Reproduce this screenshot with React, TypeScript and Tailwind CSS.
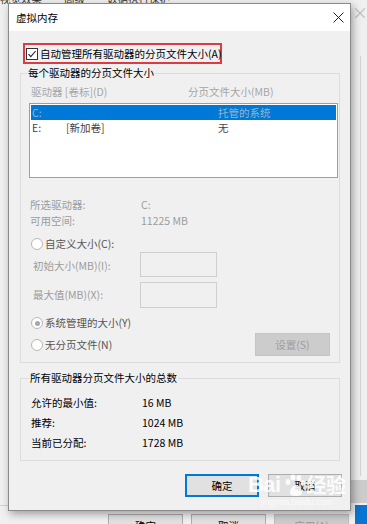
import * as React from 'react';

const font = { fontFamily: '"Noto Sans CJK SC", "Noto Sans", sans-serif' };

function Radio({ checked, label, dark }: { checked?: boolean; label: string; dark?: boolean }) {
  return (
    <div className="flex items-center gap-[2px]">
      <span className="flex h-[12px] w-[12px] items-center justify-center rounded-full border border-[#b8b8b8] bg-white">
        {checked && <span className="h-[5px] w-[5px] rounded-full bg-[#a8a8a8]" />}
      </span>
      <span className={dark ? 'text-[#555]' : 'text-[#9c9c9c]'}>{label}</span>
    </div>
  );
}

function BaiduMark() {
  return (
    <div className="pointer-events-none absolute left-[248px] top-[473px] flex flex-col items-center text-white/85">
      <div className="flex items-end text-[22px] font-bold leading-[24px] tracking-tight" style={{ fontFamily: 'Arial, "Liberation Sans", sans-serif' }}>
        <span>Bai</span>
        <svg width="24" height="24" viewBox="0 0 24 24" className="mx-[1px]">
          <ellipse cx="6" cy="9" rx="2.4" ry="3" fill="white" fillOpacity="0.85" />
          <ellipse cx="11" cy="4.5" rx="2.4" ry="3" fill="white" fillOpacity="0.85" />
          <ellipse cx="17" cy="5" rx="2.4" ry="3" fill="white" fillOpacity="0.85" />
          <ellipse cx="21" cy="10" rx="2.2" ry="2.8" fill="white" fillOpacity="0.85" />
          <path d="M8 20c0-4 3-8 6-8s6 4 6 8c0 2-2 3-6 3s-6-1-6-3z" fill="white" fillOpacity="0.85" />
        </svg>
        <span className="text-[20px]" style={font}>经验</span>
      </div>
      <span className="text-[9px] leading-[10px] text-white/70" style={{ fontFamily: 'Arial, "Liberation Sans", sans-serif' }}>
        jingyan.baidu.com
      </span>
    </div>
  );
}

export default function App() {
  return (
    <div className="relative h-[524px] w-[367px] overflow-hidden bg-[#f0f0f0] text-[10.5px] leading-[16px] text-black" style={font}>
      {/* window behind */}
      <div className="absolute left-0 top-[-9px] flex gap-[22px] whitespace-nowrap text-[10.5px] text-[#333]">
        <span>视觉效果</span>
        <span>高级</span>
        <span>数据执行保护</span>
      </div>
      <div className="absolute left-[352px] top-[4px] text-[16px] leading-[16px] text-[#bdbdbd]">×</div>
      <div className="absolute left-[360px] top-[56px] h-[420px] w-px bg-[#d5d5d5]" />
      <div className="absolute left-[350px] top-[480px] h-[23px] w-[17px] bg-[#cccccc]" />
      <div className="absolute left-[355px] top-[505px] h-[19px] w-[12px] bg-[#0a74d1]" />
      <div className="absolute left-0 top-[505px] h-px w-[10px] bg-[#d0d0d0]" />
      <div className="absolute left-[108px] top-[514px] flex gap-[8px]">
        <div className="flex h-[23px] w-[75px] justify-center border border-[#adadad] bg-[#e1e1e1] pt-[3px]">确定</div>
        <div className="flex h-[23px] w-[75px] justify-center border border-[#adadad] bg-[#e1e1e1] pt-[3px]">取消</div>
        <div className="flex h-[23px] w-[75px] justify-center border border-[#bfbfbf] bg-[#cccccc] pt-[3px] text-[#999]">应用(A)</div>
      </div>

      {/* dialog */}
      <div className="absolute left-[8px] top-[3px] flex h-[508px] w-[343px] flex-col border border-[#8a8a8a] bg-[#f0f0f0] shadow-[2px_3px_8px_rgba(0,0,0,0.35)]">
        <div className="flex h-[27px] items-center justify-between bg-white pl-[7px] pr-[6px]">
          <span className="text-[10.5px]">虚拟内存</span>
          <svg width="11" height="11" viewBox="0 0 11 11">
            <path d="M0.5 0.5l10 10M10.5 0.5l-10 10" stroke="#222" strokeWidth="1" />
          </svg>
        </div>

        <div className="flex flex-col pl-[11px] pr-[10px] pt-[12px]">
          <div className="ml-[3px] flex h-[21px] w-[199px] items-center gap-[2px] border-2 border-[#dd3b44] pl-[1px]">
            <span className="flex h-[12px] w-[12px] items-center justify-center border border-[#333] bg-white">
              <svg width="10" height="10" viewBox="0 0 10 10">
                <path d="M1.5 5.2l2.3 2.4L8.6 2" stroke="#222" strokeWidth="1.1" fill="none" />
              </svg>
            </span>
            <span className="whitespace-nowrap">自动管理所有驱动器的分页文件大小(A)</span>
          </div>

          <fieldset className="mt-[1px] border border-[#dcdcdc] pb-[6px] pl-[8px] pr-[1px]">
            <legend className="ml-[-2px] px-[1px]">每个驱动器的分页文件大小</legend>
            <div className="mt-[3px] flex h-[16px] text-[#a6a6a6]">
              <span className="ml-[2px] w-[157px]">驱动器 [卷标](D)</span>
              <span>分页文件大小(MB)</span>
            </div>
            <div className="mt-[3px] h-[75px] border border-[#9e9e9e] bg-white p-px">
              <div className="flex h-[15px] items-center bg-[#0078d7] text-[#9ab4cc]">
                <span className="ml-[1px] w-[186px]">C:</span>
                <span>托管的系统</span>
              </div>
              <div className="flex h-[15px] items-center text-[#444]">
                <span className="ml-[1px] w-[34px]">E:</span>
                <span className="w-[152px]">[新加卷]</span>
                <span>无</span>
              </div>
            </div>

            <div className="ml-[1px] mt-[19px] flex text-[#9c9c9c]">
              <span className="w-[111px]">所选驱动器:</span>
              <span>C:</span>
            </div>
            <div className="ml-[1px] flex text-[#9c9c9c]">
              <span className="w-[111px]">可用空间:</span>
              <span>11225 MB</span>
            </div>

            <div className="ml-[2px] mt-[7px]">
              <Radio label="自定义大小(C):" dark />
            </div>
            <div className="flex h-[25px] items-center">
              <span className="ml-[4px] w-[107px] pt-[3px] text-[#9c9c9c]">初始大小(MB)(I):</span>
              <div className="h-[25px] w-[77px] border border-[#cfcfcf] bg-[#f0f0f0]" />
            </div>
            <div className="mt-[5px] flex h-[26px] items-center">
              <span className="ml-[4px] w-[107px] text-[#9c9c9c]">最大值(MB)(X):</span>
              <div className="h-[26px] w-[77px] border border-[#cfcfcf] bg-[#f0f0f0]" />
            </div>

            <div className="ml-[2px] mt-[7px]">
              <Radio label="系统管理的大小(Y)" checked dark />
            </div>
            <div className="mt-[2px] flex h-[23px] items-center justify-between pr-[8px]">
              <div className="ml-[2px]">
                <Radio label="无分页文件(N)" dark />
              </div>
              <div className="flex h-[23px] w-[75px] items-center justify-center border border-[#c4c4c4] bg-[#cccccc] text-[#9c9c9c]">
                设置(S)
              </div>
            </div>
          </fieldset>

          <fieldset className="mt-[7px] border border-[#dcdcdc] pb-[7px] pl-[10px] pr-[2px]">
            <legend className="ml-[-2px] px-[1px]">所有驱动器分页文件大小的总数</legend>
            <div className="mt-[7px] flex h-[20px] items-center">
              <span className="w-[111px]">允许的最小值:</span>
              <span>16 MB</span>
            </div>
            <div className="flex h-[20px] items-center">
              <span className="w-[111px]">推荐:</span>
              <span>1024 MB</span>
            </div>
            <div className="flex h-[20px] items-center">
              <span className="w-[111px]">当前已分配:</span>
              <span>1728 MB</span>
            </div>
          </fieldset>

          <div className="mr-[-2px] mt-[13px] flex justify-end gap-[9px]">
            <div className="flex h-[23px] w-[74px] items-center justify-center border-2 border-[#0078d7] bg-[#e1e1e1]">确定</div>
            <div className="flex h-[23px] w-[74px] items-center justify-center border border-[#adadad] bg-[#e1e1e1]">取消</div>
          </div>
        </div>
      </div>

      <BaiduMark />
    </div>
  );
}
